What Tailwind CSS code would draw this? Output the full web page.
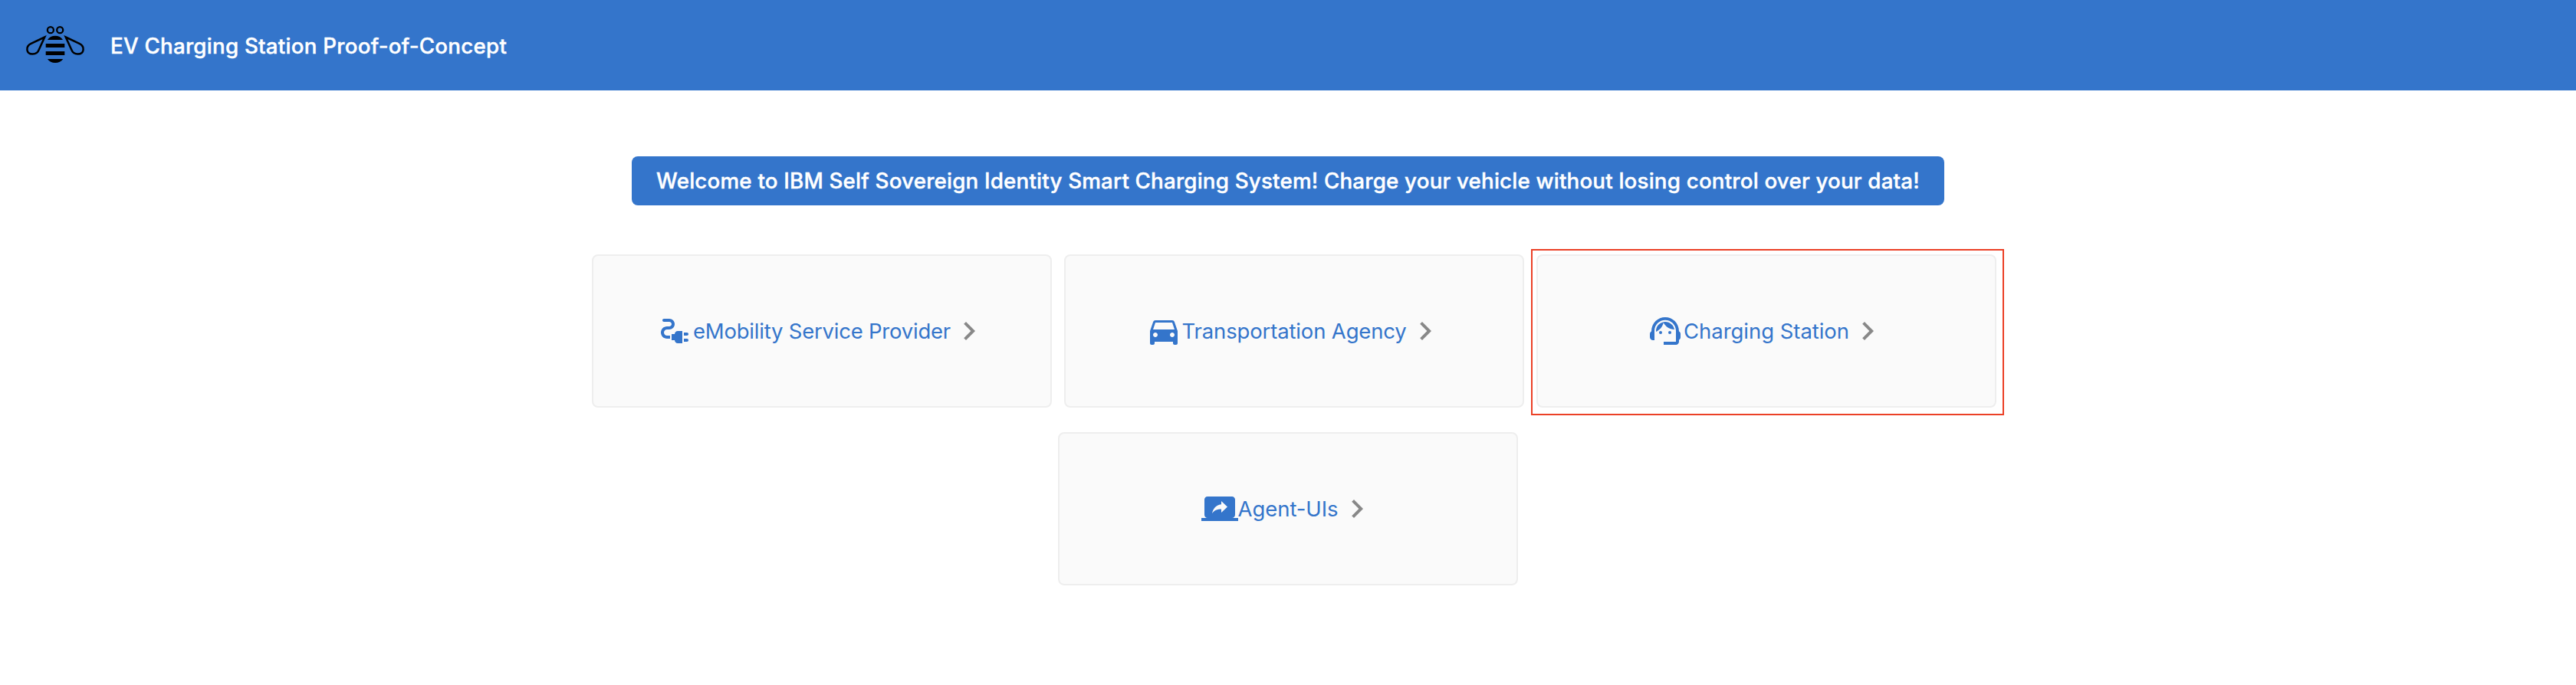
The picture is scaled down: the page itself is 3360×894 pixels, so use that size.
<!DOCTYPE html>
<html lang="en">
<head>
<meta charset="utf-8">
<title>EV Charging Station Proof-of-Concept</title>
<script src="https://cdn.jsdelivr.net/npm/@tailwindcss/browser@4"></script>
</head>
<body class="min-h-screen bg-white font-['Inter','Liberation_Sans',sans-serif] text-[27.5px] leading-[40px] text-[#3475cb]">
  <header class="flex h-[118px] items-center bg-[#3475cb] pl-8 text-white">
    <svg class="h-20 w-20 shrink-0 text-black" viewBox="0 0 80 80" fill="none" stroke="currentColor">
      <g stroke-width="2.3">
        <circle cx="33.9" cy="20.2" r="4"/>
        <circle cx="46.2" cy="20.2" r="4"/>
        <path stroke-width="2.5" d="M26.200 29.500 8.500 37.800C1 41.500 1.800 51.500 10.500 51.500c3.900 0 7-2 8.200-5.600Z"/>
        <path stroke-width="2.500" d="M53.800 29.500 71.500 37.800C79 41.500 78.200 51.500 69.500 51.500c-3.900 0-7-2-8.200-5.600Z"/>
      </g>
      <g fill="currentColor" stroke="none">
        <path d="M30 33C32.200 29.500 35.700 27.700 40 27.700S47.800 29.500 50 33Z"/>
        <path d="M27.700 38h24.600v5H27.700zM27.700 48h24.600v5H27.700z"/>
        <path d="M30 58h20.200C48 61.300 44.300 63 40 63S32.200 61.300 30 58Z"/>
      </g>
    </svg>
    <h1 class="ml-8 mt-[2px] whitespace-nowrap text-[27.75px] font-medium tracking-[0.22px] [-webkit-text-stroke:0.4px_white]">EV Charging Station Proof-of-Concept</h1>
  </header>

  <main class="flex flex-col items-center pt-[86px]">
    <div class="flex h-16 w-[1712px] items-center justify-center rounded-lg bg-[#3475cb] text-white">
      <p class="whitespace-nowrap text-[27.75px] font-medium tracking-[0.18px] [-webkit-text-stroke:0.4px_white]">Welcome to IBM Self Sovereign Identity Smart Charging System! Charge your vehicle without losing control over your data!</p>
    </div>

    <div class="mt-16 flex gap-4 pl-4">
      <a class="flex h-[200px] w-[600px] items-center justify-center rounded-lg border-2 border-[#eeeeee] bg-[#fafafa]">
        <svg class="size-12" viewBox="0 0 24 24" fill="currentColor"><path d="M21 14c0-.55-.45-1-1-1h-2v2h2c.55 0 1-.45 1-1zM20 17h-2v2h2c.55 0 1-.45 1-1s-.45-1-1-1zM12 14h-2v4h2c0 1.100.9 2 2 2h3v-8h-3c-1.100 0-2 .9-2 2z"/><path d="M5 13c0-1.100.9-2 2-2h1.500c1.930 0 3.500-1.570 3.500-3.500S10.430 4 8.500 4H5c-.55 0-1 .45-1 1s.45 1 1 1h3.500c.83 0 1.500.67 1.500 1.500S9.330 9 8.500 9H7c-2.210 0-4 1.790-4 4s1.790 4 4 4h2v-2H7c-1.100 0-2-.9-2-2z"/></svg>
        <span class="w-[336px] whitespace-nowrap tracking-[-0.22px]">eMobility Service Provider</span>
        <svg class="size-12 text-[#888888]" viewBox="0 0 24 24" fill="currentColor"><path d="M10 6 8.590 7.410 13.170 12l-4.580 4.590L10 18l6-6z"/></svg>
      </a>
      <a class="flex h-[200px] w-[600px] items-center justify-center rounded-lg border-2 border-[#eeeeee] bg-[#fafafa]">
        <svg class="size-12" viewBox="0 0 24 24" fill="currentColor"><path d="M18.920 6.010C18.720 5.420 18.160 5 17.500 5h-11c-.66 0-1.210.42-1.420 1.010L3 12v8c0 .55.45 1 1 1h1c.55 0 1-.45 1-1v-1h12v1c0 .55.45 1 1 1h1c.55 0 1-.45 1-1v-8l-2.080-5.990zM6.500 16c-.83 0-1.500-.67-1.500-1.500S5.670 13 6.500 13s1.500.67 1.500 1.500S7.330 16 6.500 16zm11 0c-.83 0-1.500-.67-1.500-1.500s.67-1.500 1.500-1.500 1.500.67 1.500 1.500-.67 1.500-1.500 1.500zM5 11l1.500-4.500h11L19 11H5z"/></svg>
        <span class="w-[293px] whitespace-nowrap tracking-[-0.15px]">Transportation Agency</span>
        <svg class="size-12 text-[#888888]" viewBox="0 0 24 24" fill="currentColor"><path d="M10 6 8.590 7.410 13.170 12l-4.580 4.590L10 18l6-6z"/></svg>
      </a>
      <div class="relative">
        <a class="flex h-[200px] w-[600px] items-center justify-center rounded-lg border-2 border-[#eeeeee] bg-[#fafafa]">
          <svg class="size-12" viewBox="0 0 24 24" fill="currentColor"><path d="M21 12.220C21 6.730 16.740 3 12 3c-4.690 0-9 3.650-9 9.280-.6.34-1 .98-1 1.720v2c0 1.100.9 2 2 2h1v-6.100c0-3.870 3.130-7 7-7s7 3.130 7 7V19h-8v2h8c1.100 0 2-.9 2-2v-1.220c.59-.31 1-.92 1-1.640v-2.300c0-.7-.41-1.310-1-1.620z"/><circle cx="9" cy="13" r="1"/><circle cx="15" cy="13" r="1"/><path d="M18 11.030C17.520 8.180 15.040 6 12.050 6c-3.030 0-6.290 2.510-6.030 6.450 2.470-1.010 4.330-3.210 4.860-5.890C12.190 9.190 14.880 11 18 11.030z"/></svg>
          <span class="w-[216px] whitespace-nowrap tracking-[-0.04px]">Charging Station</span>
          <svg class="size-12 text-[#888888]" viewBox="0 0 24 24" fill="currentColor"><path d="M10 6 8.590 7.410 13.170 12l-4.580 4.590L10 18l6-6z"/></svg>
        </a>
        <div class="pointer-events-none absolute -left-[7px] -top-[7px] h-[217px] w-[617px] border-2 border-[#eb4026]"></div>
      </div>
    </div>

    <a class="mt-8 flex h-[200px] w-[600px] items-center justify-center rounded-lg border-2 border-[#eeeeee] bg-[#fafafa]">
      <svg class="size-12" viewBox="0 0 24 24" fill="currentColor"><path d="M20 18c1.100 0 1.990-.9 1.990-2L22 6c0-1.110-.9-2-2-2H4c-1.110 0-2 .89-2 2v10c0 1.100.89 2 2 2H0v2h24v-2h-4zm-7-3.530v-2.190c-2.780 0-4.610.85-6 2.720.56-2.670 2.110-5.330 6-5.870V7l4 3.730-4 3.740z"/></svg>
      <span class="w-[131px] whitespace-nowrap tracking-[-0.06px]">Agent-UIs</span>
      <svg class="size-12 text-[#888888]" viewBox="0 0 24 24" fill="currentColor"><path d="M10 6 8.590 7.410 13.170 12l-4.580 4.590L10 18l6-6z"/></svg>
    </a>
  </main>
</body>
</html>
